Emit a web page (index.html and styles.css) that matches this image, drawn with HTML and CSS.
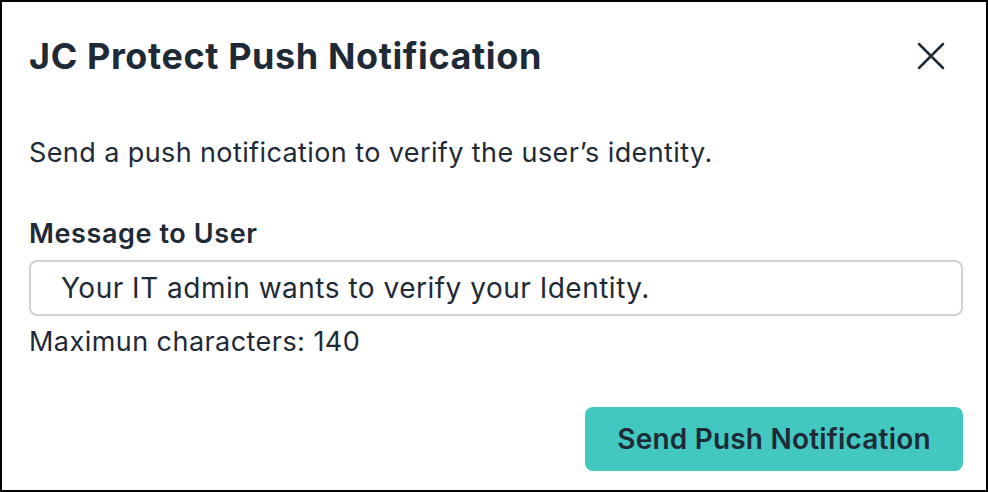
FILE: index.html
```html
<!DOCTYPE html>
<html>
<head>
<meta charset="utf-8">
<link rel="stylesheet" href="styles.css">
</head>
<body>
<div class="modal">
  <div class="header">
    <h1 class="title">JC Protect Push Notification</h1>
    <button class="close" aria-label="Close">
      <svg width="30" height="30" viewBox="0 0 30 30"><path d="M3 3 L27 27 M27 3 L3 27" stroke="#1f2a37" stroke-width="2.5" stroke-linecap="round" fill="none"/></svg>
    </button>
  </div>
  <p class="desc">Send a push notification to verify the user’s identity.</p>
  <label class="label">Message to User</label>
  <div class="input">Your IT admin wants to verify your Identity.</div>
  <p class="hint">Maximun characters: 140</p>
  <div class="footer">
    <button class="send">Send Push Notification</button>
  </div>
</div>
</body>
</html>
```
FILE: styles.css
```css
html, body {
  margin: 0;
  padding: 0;
  background: #fff;
}
.modal {
  box-sizing: border-box;
  width: 988px;
  height: 492px;
  border: 2px solid #000;
  padding: 0 23px 0 27px;
  font-family: Inter, "Noto Sans", sans-serif;
  color: #1f2a37;
  display: flex;
  flex-direction: column;
}
.header {
  display: flex;
  align-items: center;
  justify-content: space-between;
  height: 108px;
}
.title {
  margin: 0;
  font-size: 36px;
  font-weight: 700;
  letter-spacing: 0.6px;
}
.close {
  background: none;
  border: none;
  padding: 0;
  margin-right: 17px;
  display: flex;
}
.desc {
  margin: 27px 0 0;
  font-size: 27px;
  letter-spacing: 0.4px;
  line-height: 32px;
}
.label {
  margin-top: 49px;
  font-size: 27px;
  font-weight: 600;
  letter-spacing: 0.6px;
  line-height: 32px;
}
.input {
  margin-top: 10px;
  height: 56px;
  box-sizing: border-box;
  border: 2px solid #cfd3d7;
  border-radius: 8px;
  padding-left: 30px;
  display: flex;
  align-items: center;
  font-size: 28px;
  letter-spacing: 0.5px;
}
.hint {
  margin: 10px 0 0;
  font-size: 27px;
  letter-spacing: 0.45px;
  line-height: 32px;
}
.footer {
  display: flex;
  justify-content: flex-end;
  margin-top: 49px;
}
.send {
  width: 378px;
  height: 64px;
  border: none;
  border-radius: 8px;
  background: #42c8c1;
  color: #1f2a37;
  font-family: Inter, "Noto Sans", sans-serif;
  font-size: 28px;
  font-weight: 600;
  letter-spacing: 0.2px;
}
```
